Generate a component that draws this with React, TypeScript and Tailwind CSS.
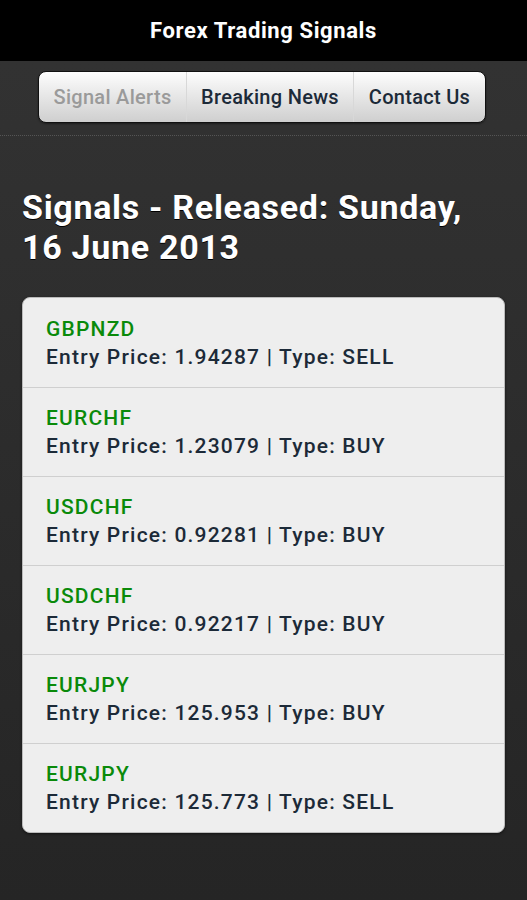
const signals = [
  { pair: 'GBPNZD', price: '1.94287', type: 'SELL' },
  { pair: 'EURCHF', price: '1.23079', type: 'BUY' },
  { pair: 'USDCHF', price: '0.92281', type: 'BUY' },
  { pair: 'USDCHF', price: '0.92217', type: 'BUY' },
  { pair: 'EURJPY', price: '125.953', type: 'BUY' },
  { pair: 'EURJPY', price: '125.773', type: 'SELL' },
]

const navItems = [
  { label: 'Signal Alerts', active: true, w: 'w-[147px]' },
  { label: 'Breaking News', active: false, w: 'w-[167px]' },
  { label: 'Contact Us', active: false, w: 'flex-1' },
]

const App = () => {
  return (
    <div className="min-h-[900px] flex flex-col bg-gradient-to-b from-[#333333] to-[#252525] font-['Roboto',sans-serif]">
      <header className="h-[61px] bg-black flex items-center justify-center">
        <h1 className="text-white text-[22px] tracking-[0.6px] font-bold [text-shadow:0_1px_0_#111]">
          Forex Trading Signals
        </h1>
      </header>

      <div className="pt-[10px] pb-[12px] border-b border-dotted border-[#555] flex">
        <nav className="ml-[38px] w-[448px] h-[52px] flex rounded-[8px] border border-[#111] overflow-hidden bg-gradient-to-b from-[#fdfdfd] to-[#cfcfcf] shadow-[0_1px_2px_rgba(0,0,0,0.4)]">
          {navItems.map((item, i) => (
            <div
              key={item.label}
              className={`${item.w} flex items-center justify-center text-[20px] tracking-[0.3px] font-medium ${
                i > 0 ? 'border-l border-[#d8d8d8]' : ''
              } ${item.active ? 'text-[#9a9a9a]' : 'text-[#1c2a38]'}`}
            >
              {item.label}
            </div>
          ))}
        </nav>
      </div>

      <main className="px-[22px] pt-[51px]">
        <h2 className="text-white text-[34px] leading-[40px] tracking-[0.7px] font-bold [text-shadow:0_1px_0_#000]">
          Signals - Released: Sunday, 16 June 2013
        </h2>

        <ul className="mt-[30px] bg-[#eeeeee] rounded-[8px] border border-[#bbbbbb] shadow-[0_1px_3px_rgba(0,0,0,0.5)]">
          {signals.map((s, i) => (
            <li
              key={i}
              className={`h-[89px] px-[23px] flex flex-col justify-center ${
                i > 0 ? 'border-t border-[#cfcfcf]' : ''
              }`}
            >
              <p className="text-[#0a8a0a] text-[21px] leading-[28px] tracking-[1.2px] font-medium">{s.pair}</p>
              <p className="text-[#1c2a38] text-[21px] leading-[28px] tracking-[1.2px] font-medium">
                Entry Price: {s.price} | Type: {s.type}
              </p>
            </li>
          ))}
        </ul>
      </main>
    </div>
  )
}

export default App
